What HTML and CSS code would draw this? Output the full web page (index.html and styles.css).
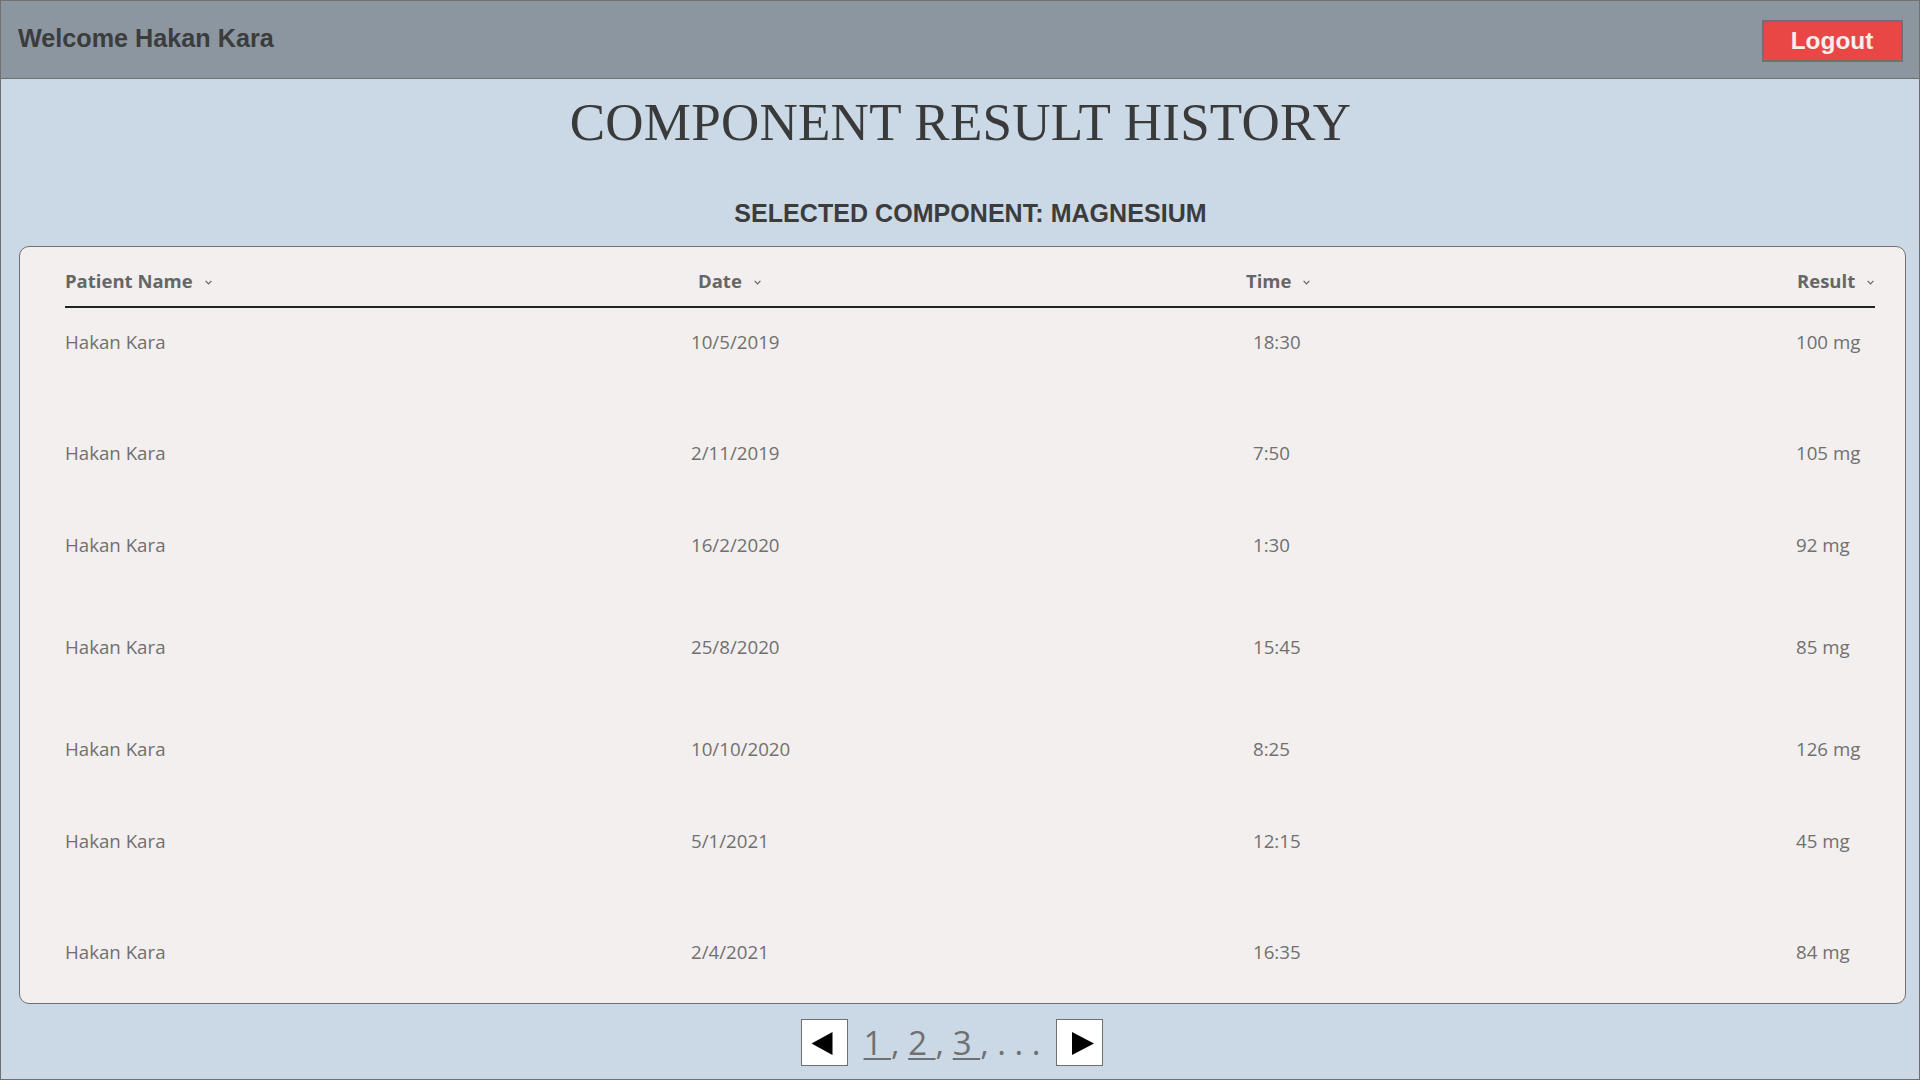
FILE: index.html
```html
<!DOCTYPE html>
<html lang="en">
<head>
<meta charset="utf-8">
<title>Component Result History</title>
<link rel="stylesheet" href="styles.css">
</head>
<body>
<div class="app">
  <header class="topbar">
    <div class="welcome">Welcome Hakan Kara</div>
    <button class="logout">Logout</button>
  </header>
  <main class="main">
    <h1 class="title">COMPONENT RESULT HISTORY</h1>
    <h2 class="subtitle">SELECTED COMPONENT: MAGNESIUM</h2>
    <section class="card">
      <div class="thead">
        <div class="th">Patient Name<svg class="chev" width="7" height="5" viewBox="0 0 7 5"><polyline points="0.6,0.8 3.5,3.8 6.4,0.8" fill="none" stroke="#666" stroke-width="1.2"/></svg></div>
        <div class="th">Date<svg class="chev" width="7" height="5" viewBox="0 0 7 5"><polyline points="0.6,0.8 3.5,3.8 6.4,0.8" fill="none" stroke="#666" stroke-width="1.2"/></svg></div>
        <div class="th">Time<svg class="chev" width="7" height="5" viewBox="0 0 7 5"><polyline points="0.6,0.8 3.5,3.8 6.4,0.8" fill="none" stroke="#666" stroke-width="1.2"/></svg></div>
        <div class="th">Result<svg class="chev" width="7" height="5" viewBox="0 0 7 5"><polyline points="0.6,0.8 3.5,3.8 6.4,0.8" fill="none" stroke="#666" stroke-width="1.2"/></svg></div>
      </div>
      <div class="tbody">
        <div class="tr"><div class="td">Hakan Kara</div><div class="td date">10/5/2019</div><div class="td time">18:30</div><div class="td result">100 mg</div></div>
        <div class="tr"><div class="td">Hakan Kara</div><div class="td date">2/11/2019</div><div class="td time">7:50</div><div class="td result">105 mg</div></div>
        <div class="tr"><div class="td">Hakan Kara</div><div class="td date">16/2/2020</div><div class="td time">1:30</div><div class="td result">92 mg</div></div>
        <div class="tr"><div class="td">Hakan Kara</div><div class="td date">25/8/2020</div><div class="td time">15:45</div><div class="td result">85 mg</div></div>
        <div class="tr"><div class="td">Hakan Kara</div><div class="td date">10/10/2020</div><div class="td time">8:25</div><div class="td result">126 mg</div></div>
        <div class="tr"><div class="td">Hakan Kara</div><div class="td date">5/1/2021</div><div class="td time">12:15</div><div class="td result">45 mg</div></div>
        <div class="tr"><div class="td">Hakan Kara</div><div class="td date">2/4/2021</div><div class="td time">16:35</div><div class="td result">84 mg</div></div>
      </div>
    </section>
    <nav class="pager">
      <button class="pbtn"><svg width="44" height="44" viewBox="0 0 44 44"><polygon points="9.5,22.5 30.5,11 30.5,34" fill="#000"/></svg></button>
      <div class="pages"><a class="pg">1&nbsp;</a>, <a class="pg">2&nbsp;</a>, <a class="pg">3&nbsp;</a>, . . .</div>
      <button class="pbtn"><svg width="44" height="44" viewBox="0 0 44 44"><polygon points="14,11 14,34 36,22.5" fill="#000"/></svg></button>
    </nav>
  </main>
</div>
</body>
</html>
```
FILE: styles.css
```css
html, body {
  margin: 0;
  padding: 0;
}
body {
  background: #cbd9e6;
}
.app {
  width: 1920px;
  height: 1080px;
  box-sizing: border-box;
  border: 1px solid #707070;
  background: #cbd9e6;
  display: flex;
  flex-direction: column;
  overflow: hidden;
}
.topbar {
  height: 77px;
  flex: none;
  background: #8b96a0;
  border-bottom: 1px solid #707070;
  display: flex;
  justify-content: space-between;
  align-items: flex-start;
  padding: 0 16px 0 17px;
}
.welcome {
  margin-top: 23px;
  font-family: "Liberation Sans", Arial, sans-serif;
  font-weight: bold;
  font-size: 25.2px;
  line-height: 28px;
  color: #3c3c3c;
}
.logout {
  margin-top: 19px;
  width: 141px;
  height: 42px;
  box-sizing: border-box;
  background: #e94646;
  border: 2px solid #707070;
  border-radius: 0;
  color: #f4eeee;
  font-family: "Liberation Sans", Arial, sans-serif;
  font-weight: bold;
  font-size: 24.4px;
  line-height: 36px;
  padding: 0 1px 0 0;
}
.main {
  display: flex;
  flex-direction: column;
  align-items: stretch;
}
.title {
  margin: 13px 0 0 0;
  text-align: center;
  font-family: "Liberation Serif", "Times New Roman", serif;
  font-weight: normal;
  font-size: 53px;
  line-height: 60px;
  letter-spacing: 0.25px;
  color: #3a3a3a;
  padding-left: 1px;
}
.subtitle {
  margin: 46px 0 0 0;
  text-align: center;
  font-family: "Liberation Sans", Arial, sans-serif;
  font-weight: bold;
  font-size: 25px;
  line-height: 30px;
  letter-spacing: 0.05px;
  color: #3c3c3c;
  padding-left: 21px;
}
.card {
  margin: 18px 13px 0 18px;
  height: 758px;
  box-sizing: border-box;
  background: #f2efee;
  border: 1px solid #707070;
  border-radius: 10px;
  padding: 22px 30px 0 45px;
  font-family: "Open Sans", "Noto Sans", sans-serif;
}
.thead, .tr {
  display: grid;
  grid-template-columns: 633px 548px 551px 1fr;
}
.thead {
  padding-bottom: 13px;
  border-bottom: 2px solid #222;
}
.th {
  display: flex;
  align-items: center;
  font-size: 18.5px;
  font-weight: 700;
  line-height: 24px;
  color: #666;
}
.chev {
  margin-left: 12px;
  margin-top: 2px;
}
.tbody {
  padding-top: 22px;
}
.tr {
  height: 102px;
}
.tr:nth-child(1) { height: 111px; }
.tr:nth-child(2) { height: 92px; }
.tr:nth-child(5) { height: 92px; }
.tr:nth-child(6) { height: 111px; }
.tr:nth-child(7) { height: 24px; }
.td {
  font-size: 18.7px;
  line-height: 24px;
  color: #707070;
}
.td.date { margin-left: -7px; }
.td.time { margin-left: 7px; }
.td.result { margin-left: -1px; }
.pager {
  margin-top: 15px;
  display: flex;
  justify-content: center;
  align-items: flex-start;
  padding-right: 16px;
}
.pbtn {
  width: 47px;
  height: 47px;
  box-sizing: border-box;
  background: #fff;
  border: 1px solid #707070;
  border-radius: 0;
  padding: 0;
  display: flex;
  align-items: center;
  justify-content: center;
}
.pbtn svg { display: block; }
.pages {
  margin: 0 16px;
  font-family: "Open Sans", "Noto Sans", sans-serif;
  font-size: 33px;
  line-height: 47px;
  color: #707070;
  white-space: nowrap;
}
.pg {
  color: #707070;
  text-decoration: underline;
  text-decoration-thickness: 2px;
  text-underline-offset: 3px;
}
```
